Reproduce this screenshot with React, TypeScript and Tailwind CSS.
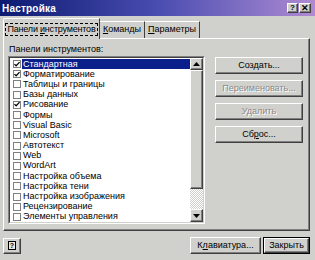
import React from 'react';

const ROWS: { label: string; checked: boolean }[] = [
  { label: 'Стандартная', checked: true },
  { label: 'Форматирование', checked: true },
  { label: 'Таблицы и границы', checked: false },
  { label: 'Базы данных', checked: false },
  { label: 'Рисование', checked: true },
  { label: 'Формы', checked: false },
  { label: 'Visual Basic', checked: false },
  { label: 'Microsoft', checked: false },
  { label: 'Автотекст', checked: false },
  { label: 'Web', checked: false },
  { label: 'WordArt', checked: false },
  { label: 'Настройка объема', checked: false },
  { label: 'Настройка тени', checked: false },
  { label: 'Настройка изображения', checked: false },
  { label: 'Рецензирование', checked: false },
  { label: 'Элементы управления', checked: false },
];

const raised =
  'border border-t-white border-l-white border-r-[#404040] border-b-[#404040] shadow-[inset_-1px_-1px_#808080] bg-[#d0d0cc]';

function Check() {
  return (
    <svg width="7" height="7" viewBox="0 0 7 7">
      <path d="M0.5 3 L2.5 5 L6.5 0.8" stroke="#000" strokeWidth="1.4" fill="none" />
    </svg>
  );
}

function Arrow({ down }: { down?: boolean }) {
  return (
    <svg width="7" height="4" viewBox="0 0 7 4">
      <path d={down ? 'M0 0 H7 L3.5 4 Z' : 'M0 4 H7 L3.5 0 Z'} fill="#000" />
    </svg>
  );
}

function SideButton({ label, disabled }: { label: React.ReactNode; disabled?: boolean }) {
  return (
    <div
      className={`${raised} h-[17px] flex items-center justify-center ${
        disabled ? 'text-[#8a8a8a] [text-shadow:1px_1px_0_#fff]' : 'text-black'
      }`}
    >
      {label}
    </div>
  );
}

export default function App() {
  return (
    <div className="w-[315px] h-[260px] bg-[#d0d0cc] flex flex-col text-[9px] text-black font-['Liberation_Sans',Arial,sans-serif] overflow-hidden">
      {/* Title bar */}
      <div className="h-[16px] flex items-center pl-[2px] pr-[4px] bg-gradient-to-r from-[#0c1a72] via-[#4a4cb0] to-[#b08ad2]">
        <span className="text-white font-bold text-[10px] tracking-[0.2px]">Настройка</span>
        <div className="ml-auto flex gap-[1px]">
          <div className={`${raised} w-[11px] h-[10px] flex items-center justify-center font-bold text-[8px] leading-none`}>?</div>
          <div className={`${raised} w-[12px] h-[10px] flex items-center justify-center font-bold text-[9px] leading-none`}>✕</div>
        </div>
      </div>

      {/* Tabs */}
      <div className="mt-[2px] pl-[3px] h-[20px] flex items-end">
        <div className="relative z-10 -mb-[1px] h-[21px] w-[97px] bg-[#d0d0cc] border-t border-l border-r border-t-white border-l-white border-r-[#404040] rounded-tl-[2px] flex items-center justify-center">
          <div className="border border-dashed border-black px-[1px] h-[13px] flex items-center leading-none whitespace-nowrap tracking-[-0.2px]">
            <span>
              Панели <span className="underline">и</span>нструментов
            </span>
          </div>
        </div>
        <div className="h-[17px] w-[45px] border-t border-r border-t-white border-r-[#404040] flex items-center justify-center">
          <span>
            <span className="underline">К</span>оманды
          </span>
        </div>
        <div className="h-[17px] w-[55px] border-t border-r border-t-white border-r-[#404040] flex items-center justify-center">
          <span>
            <span className="underline">П</span>араметры
          </span>
        </div>
      </div>

      {/* Panel */}
      <div className="ml-[3px] w-[307px] h-[193px] border border-t-white border-l-white border-r-[#404040] border-b-[#404040] shadow-[inset_-1px_-1px_#808080] flex flex-col pl-[4px] pt-[5px]">
        <div className="h-[11px] leading-[11px] pl-[1px]">Панели инструментов:</div>
        <div className="flex mt-[1px]">
          {/* List box */}
          <div className="w-[197px] h-[168px] border border-t-[#808080] border-l-[#808080] border-r-white border-b-white">
            <div className="w-full h-full border border-t-[#404040] border-l-[#404040] border-r-[#d0d0cc] border-b-[#d0d0cc] bg-white flex">
              <div className="flex-1 flex flex-col pt-[1px]">
                {ROWS.map((r, i) => (
                  <div key={r.label} className="h-[10.3px] flex items-center pl-[3px]">
                    <div className="w-[8px] h-[8px] border border-[#808080] bg-white flex items-center justify-center shrink-0">
                      {r.checked && <Check />}
                    </div>
                    <div
                      className={`ml-[1px] flex-1 h-full flex items-center pl-[1px] leading-none ${
                        i === 0 ? 'bg-[#0a1e8c] text-white' : ''
                      }`}
                    >
                      {r.label}
                    </div>
                  </div>
                ))}
              </div>
              {/* Scrollbar */}
              <div className="w-[13px] flex flex-col bg-[#ecece8]">
                <div className={`${raised} h-[12px] flex items-center justify-center`}>
                  <Arrow />
                </div>
                <div className={`${raised} h-[119px]`} />
                <div className="flex-1 bg-[repeating-conic-gradient(#ffffff_0_25%,#d0d0cc_0_50%)] bg-[length:2px_2px]" />
                <div className={`${raised} h-[13px] flex items-center justify-center`}>
                  <Arrow down />
                </div>
              </div>
            </div>
          </div>

          {/* Right buttons */}
          <div className="ml-[10px] w-[88px] flex flex-col gap-[6px] pt-[1px]">
            <SideButton label="Создать..." />
            <SideButton label="Переименовать..." disabled />
            <SideButton label="Удалить" disabled />
            <SideButton
              label={
                <span>
                  Сб<span className="underline">р</span>ос...
                </span>
              }
            />
          </div>
        </div>
      </div>

      {/* Bottom row */}
      <div className="mt-[6px] flex items-center pl-[3px] pr-[5px]">
        <div className={`${raised} w-[18px] h-[16px] flex items-center justify-center`}>
          <div className="w-[8px] h-[9px] border border-black bg-[#e8e8e0] flex items-center justify-center text-[7px] font-bold leading-none">
            ?
          </div>
        </div>
        <div className={`${raised} ml-auto w-[71px] h-[17px] flex items-center justify-center`}>
          <span>
            К<span className="underline">л</span>авиатура...
          </span>
        </div>
        <div className="ml-[2px] w-[47px] h-[17px] border border-black">
          <div className={`${raised} w-full h-full flex items-center justify-center`}>Закрыть</div>
        </div>
      </div>
    </div>
  );
}
